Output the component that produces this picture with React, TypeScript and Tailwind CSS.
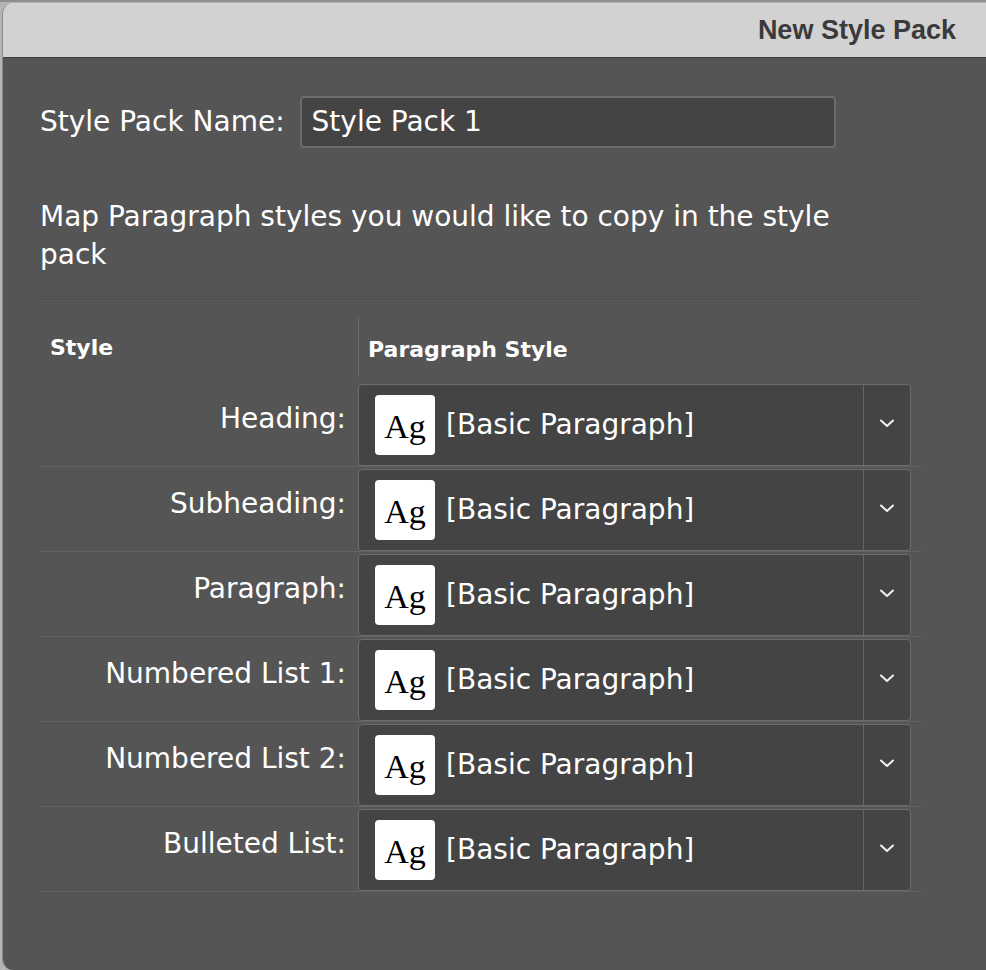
import React from 'react'

const rows = ['Heading:', 'Subheading:', 'Paragraph:', 'Numbered List 1:', 'Numbered List 2:', 'Bulleted List:']

const ui = { fontFamily: '"DejaVu Sans", "Liberation Sans", sans-serif' }
const serif = { fontFamily: '"Liberation Serif", "DejaVu Serif", serif' }

const Chevron = () => (
  <svg width="18" height="12" viewBox="0 0 18 12" fill="none">
    <path d="M3 3.5 L9 9 L15 3.5" stroke="#f2f2f2" strokeWidth="2" strokeLinecap="round" strokeLinejoin="round" />
  </svg>
)

const StyleSelect = () => (
  <div className="flex h-[82px] w-[553px] rounded-[4px] border border-[#6c6c6c] bg-[#444444]">
    <div className="flex flex-1 items-center pl-[16px]">
      <div className="flex h-[60px] w-[60px] items-center justify-center rounded-[4px] bg-white pt-[3px]">
        <span className="text-[34px] leading-none text-black" style={serif}>
          Ag
        </span>
      </div>
      <span className="ml-[11px] text-[28px] text-white">[Basic Paragraph]</span>
    </div>
    <div className="flex w-[47px] items-center justify-center border-l border-[#666666] pb-[4px]">
      <Chevron />
    </div>
  </div>
)

export default function App() {
  return (
    <div className="h-[970px] w-[986px] overflow-hidden border-t-2 border-[#8e8e8e] bg-[#b4b4b4] pl-[2px] pt-[1px]" style={ui}>
      <div className="flex h-[967px] flex-col overflow-hidden rounded-l-[11px] border-l border-[#8a8a8a]">
        <div className="flex h-[55px] items-center justify-end border-b border-[#3c3c3c] bg-[#d2d2d2] pr-[30px]">
          <span className="text-[27px] font-bold text-[#3a3a3a]" style={{ fontFamily: '"Liberation Sans", sans-serif' }}>
            New Style Pack
          </span>
        </div>
        <div className="flex-1 bg-[#555555] pl-[37px] pr-[65px] text-white">
          <div className="mt-[38px] flex items-center">
            <span className="text-[28px]">Style Pack Name:</span>
            <div className="ml-[15px] flex h-[52px] w-[536px] items-center rounded-[4px] border-2 border-[#6c6c6c] bg-[#444444] pl-[10px] text-[28px]">
              Style Pack 1
            </div>
          </div>
          <p className="mt-[50px] max-w-[850px] text-[28px] leading-[38px]">
            Map Paragraph styles you would like to copy in the style pack
          </p>
          <div className="mt-[22px] h-[3px] border-y border-[#4c4c4c] bg-[#5a5a5a]" />
          <div className="flex h-[83px]">
            <div className="flex w-[318px] items-center pl-[10px] pt-[14px] text-[22px] font-bold">Style</div>
            <div className="mb-[5px] mt-[18px] flex items-center border-l border-[#6a6a6a] pl-[9px] text-[22px] font-bold">
              <span className="-mb-[4px]">Paragraph Style</span>
            </div>
          </div>
          {rows.map((label) => (
            <div key={label} className="flex h-[85px] border-b border-[#636363] pt-[2px]">
              <div className="flex w-[318px] items-center justify-end pb-[12px] pr-[12px] text-[28px]">{label}</div>
              <StyleSelect />
            </div>
          ))}
        </div>
      </div>
    </div>
  )
}
